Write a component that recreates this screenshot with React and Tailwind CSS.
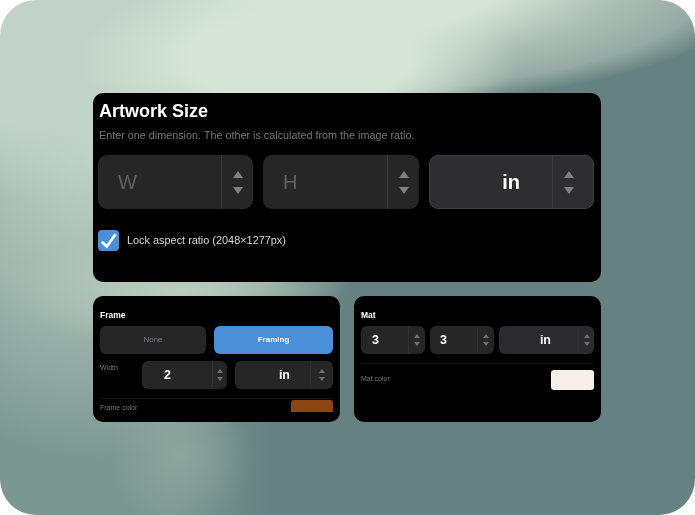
function Arrows({ size = "lg" }) {
  if (size === "sm") {
    return (
      <div className="flex flex-col items-center gap-[4px]">
        <div className="h-0 w-0 border-x-[3.5px] border-b-[4px] border-x-transparent border-b-[#6f6f72]" />
        <div className="h-0 w-0 border-x-[3.5px] border-t-[4px] border-x-transparent border-t-[#6f6f72]" />
      </div>
    );
  }
  return (
    <div className="flex flex-col items-center gap-[9px]">
      <div className="h-0 w-0 border-x-[5.5px] border-b-[7px] border-x-transparent border-b-[#808083]" />
      <div className="h-0 w-0 border-x-[5.5px] border-t-[7px] border-x-transparent border-t-[#808083]" />
    </div>
  );
}

function BigField({ label, className, strong }) {
  return (
    <div
      className={`flex h-[54px] rounded-[9px] ${
        strong ? "bg-[#2e2e30] border border-[#414143] pr-[9px]" : "bg-[#262627]"
      } ${className}`}
    >
      {strong ? (
        <div className="flex flex-1 items-center justify-end pr-[32px] text-[20px] font-bold text-white">{label}</div>
      ) : (
        <div className="flex flex-1 items-center pl-[20px] text-[20px] text-[#606062]">{label}</div>
      )}
      <div className="flex w-[32px] items-center justify-center border-l border-[#3a3a3c]">
        <Arrows />
      </div>
    </div>
  );
}

function SmallField({ value, className, pad, arrowW = "w-[16px]", bg = "bg-[#262627]" }) {
  return (
    <div className={`flex h-[28px] rounded-[6px] ${bg} ${className}`}>
      <div className={`flex flex-1 items-center text-[12.5px] font-bold text-white ${pad}`}>{value}</div>
      <div className={`flex ${arrowW} items-center justify-center border-l border-[#303032]`}>
        <Arrows size="sm" />
      </div>
    </div>
  );
}

export default function App() {
  return (
    <div className="h-[515px] w-[695px] overflow-hidden bg-white font-['Liberation_Sans',Arial,sans-serif]">
      <div className="h-full w-full rounded-[36px] bg-[radial-gradient(ellipse_220px_90px_at_300px_60px,#d6e4d8_0%,#d6e4d8_50%,rgba(214,228,216,0)_100%),radial-gradient(ellipse_270px_150px_at_40px_50px,#c1d3c8_0%,#c1d3c8_50%,rgba(193,211,200,0)_100%),radial-gradient(ellipse_469px_130px_at_300px_-20px,#dae7db_0%,#d4e2d6_45%,#a9bdb3_70%,rgba(154,175,168,0.9)_88%,rgba(154,175,168,0)_100%),radial-gradient(ellipse_170px_60px_at_180px_290px,#bacdbf_0%,rgba(186,205,191,0)_100%),radial-gradient(ellipse_280px_330px_at_100px_130px,#c3d5c8_0%,#a0b6ae_55%,rgba(160,182,174,0)_100%),radial-gradient(ellipse_70px_75px_at_180px_455px,#8ea59c_0%,rgba(142,165,156,0)_100%),linear-gradient(90deg,#7c9792_0px,#7c9792_170px,#668280_275px,#668280_100%)] pl-[93px] pt-[93px]">
        <div className="w-[508px]">
          <section className="h-[189px] rounded-[10px] bg-black pl-[5px] pt-[8px] will-change-transform">
            <h1 className="pl-px text-[18px] leading-[20px] font-bold text-white">Artwork Size</h1>
            <p className="mt-[8px] pl-px text-[10.8px] leading-[13px] text-[#77777a]">
              Enter one dimension. The other is calculated from the image ratio.
            </p>
            <div className="mt-[13px] flex gap-[10px]">
              <BigField label="W" className="w-[155px]" />
              <BigField label="H" className="w-[156px]" />
              <BigField label="in" className="w-[165px]" strong />
            </div>
            <label className="mt-[21px] flex items-center gap-[8px]">
              <span className="flex h-[21px] w-[21px] items-center justify-center rounded-[4px] bg-[#4a90d9]">
                <svg viewBox="0 0 21 21" className="h-[21px] w-[21px]" fill="none">
                  <path d="M3.7 11.7 L8.8 16.5 L17.5 4.2" stroke="#fff" strokeWidth="2.8" />
                </svg>
              </span>
              <span className="text-[10.9px] text-[#d8d8d8]">Lock aspect ratio (2048×1277px)</span>
            </label>
          </section>

          <div className="mt-[14px] flex gap-[14px]">
            <section className="h-[126px] w-[247px] rounded-[10px] bg-black px-[7px] pt-[14px] will-change-transform">
              <h2 className="text-[8.5px] leading-[10px] font-bold text-white">Frame</h2>
              <div className="h-[92px] overflow-hidden">
                <div className="mt-[6px] flex gap-[8px]">
                  <div className="flex h-[28px] w-[106px] items-center justify-center rounded-[6px] bg-[#262627] text-[8px] text-[#77777a]">
                    None
                  </div>
                  <div className="flex h-[28px] w-[119px] items-center justify-center rounded-[6px] bg-[#4a90d9] text-[8px] font-bold text-white">
                    Framing
                  </div>
                </div>
                <div className="mt-[7px] flex">
                  <div className="w-[42px] pt-[2px] text-[7px] leading-[10px] text-[#77777a]">Width</div>
                  <SmallField value="2" className="w-[85px]" pad="justify-end pr-[41px]" arrowW="w-[15px]" />
                  <SmallField value="in" className="ml-[8px] w-[98px]" pad="justify-end pr-[20px]" arrowW="w-[23px]" />
                </div>
                <div className="mt-[9px] flex justify-between border-t border-[#161616] pt-[1px]">
                  <div className="pt-[3px] text-[7px] leading-[10px] text-[#77777a]">Frame color</div>
                  <div className="h-[20px] w-[42px] rounded-[3px] bg-[#8b4513]" />
                </div>
              </div>
            </section>

            <section className="h-[126px] w-[247px] rounded-[10px] bg-black px-[7px] pt-[14px] will-change-transform">
              <h2 className="text-[8.5px] leading-[10px] font-bold text-white">Mat</h2>
              <div className="mt-[6px] flex gap-[5px]">
                <SmallField value="3" className="w-[64px]" pad="pl-[11px]" arrowW="w-[17px]" />
                <SmallField value="3" className="w-[64px]" pad="pl-[10px]" arrowW="w-[17px]" />
                <SmallField value="in" className="w-[95px]" pad="justify-end pr-[27px]" bg="bg-[#2b2b2d]" />
              </div>
              <div className="mt-[9px] flex justify-between border-t border-[#161616] pt-[6px]">
                <div className="pt-[4px] text-[7px] leading-[10px] text-[#77777a]">Mat color</div>
                <div className="h-[20px] w-[43px] rounded-[3px] bg-[#f5f1e8]" />
              </div>
            </section>
          </div>
        </div>
      </div>
    </div>
  );
}
